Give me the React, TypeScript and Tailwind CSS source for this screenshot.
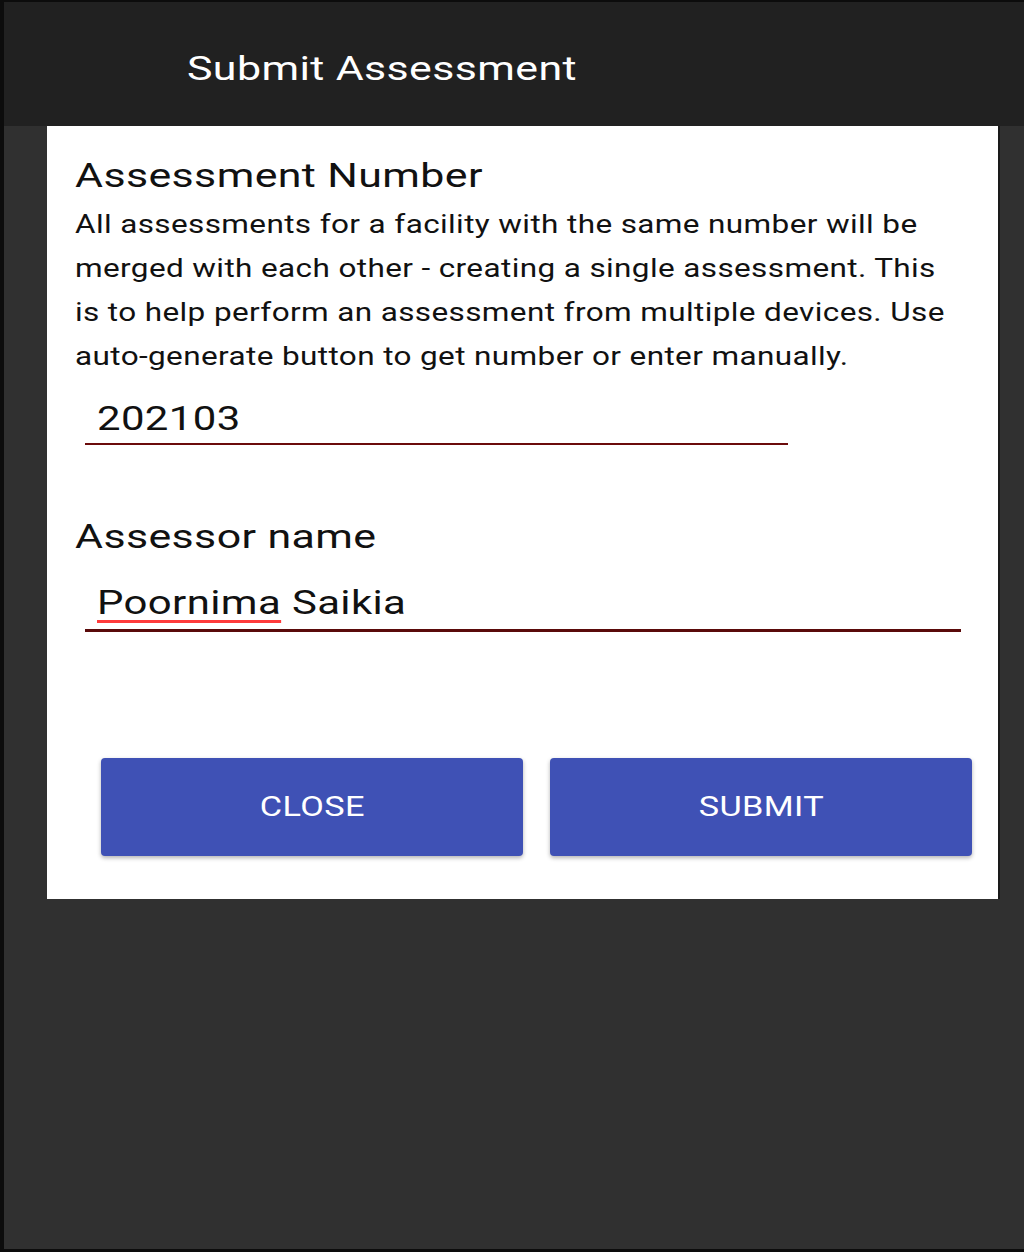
const sx = "inline-block origin-left scale-x-[1.27] whitespace-nowrap";
const sh = "inline-block origin-left scale-x-[1.3] whitespace-nowrap";
const sb = "inline-block origin-left scale-x-[1.26] whitespace-nowrap";

export default function App() {
  return (
    <div
      className="h-[1252px] w-[1024px] bg-[#303030] border-l-[4px] border-t-[2px] border-b-[3px] border-[#0c0c0c] flex flex-col overflow-hidden"
      style={{ fontFamily: "Roboto, 'Noto Sans', sans-serif" }}
    >
      <div className="h-[124px] bg-[#212121] flex items-center pl-[183px] pt-[8px] shrink-0">
        <h1 className="text-white text-[33px] leading-none tracking-[0.3px]">
          <span className={sh}>Submit Assessment</span>
        </h1>
      </div>
      <div className="ml-[43px] w-[953px] h-[773px] bg-white border-r-[2px] border-[#1a1a1a] pl-[28px] pt-[32px] flex flex-col shrink-0">
        <h2 className="text-[#111] text-[33px] leading-[36px] tracking-[0.3px]">
          <span className={sh}>Assessment Number</span>
        </h2>
        <p className="text-[#111] text-[25px] leading-[44px] tracking-[0.3px] mt-[9px] flex flex-col">
          <span className={sb}>All assessments for a facility with the same number will be</span>
          <span className={sb}>merged with each other - creating a single assessment. This</span>
          <span className={sb}>is to help perform an assessment from multiple devices. Use</span>
          <span className={sb}>auto-generate button to get number or enter manually.</span>
        </p>
        <div className="ml-[10px] mt-[20px] w-[703px] border-b-[2px] border-[#6b0b0b] pl-[12px] pb-[4px]">
          <span className="text-[#111] text-[33px] leading-[40px] tracking-[0.3px]">
            <span className={sx}>202103</span>
          </span>
        </div>
        <h2 className="text-[#111] text-[33px] leading-[36px] tracking-[0.3px] mt-[74px]">
          <span className={sh}>Assessor name</span>
        </h2>
        <div className="ml-[10px] mt-[28px] w-[876px] border-b-[3px] border-[#5a0a0a] pl-[12px] pb-[6px]">
          <span className="text-[#111] text-[33px] leading-[40px] tracking-[0.3px]">
            <span className={sx}>
              <span className="underline decoration-[#ff3b3b] decoration-[3px] underline-offset-[6px]">Poornima</span> Saikia
            </span>
          </span>
        </div>
        <div className="flex gap-[27px] ml-[26px] mt-[126px]">
          <button className="w-[422px] h-[98px] bg-[#3f51b5] rounded-[4px] shadow-[0_2px_4px_rgba(0,0,0,0.3)] text-white text-[27px] tracking-[0.3px]">
            <span className="inline-block scale-x-[1.27]">CLOSE</span>
          </button>
          <button className="w-[422px] h-[98px] bg-[#3f51b5] rounded-[4px] shadow-[0_2px_4px_rgba(0,0,0,0.3)] text-white text-[27px] tracking-[0.3px]">
            <span className="inline-block scale-x-[1.27]">SUBMIT</span>
          </button>
        </div>
      </div>
    </div>
  );
}
